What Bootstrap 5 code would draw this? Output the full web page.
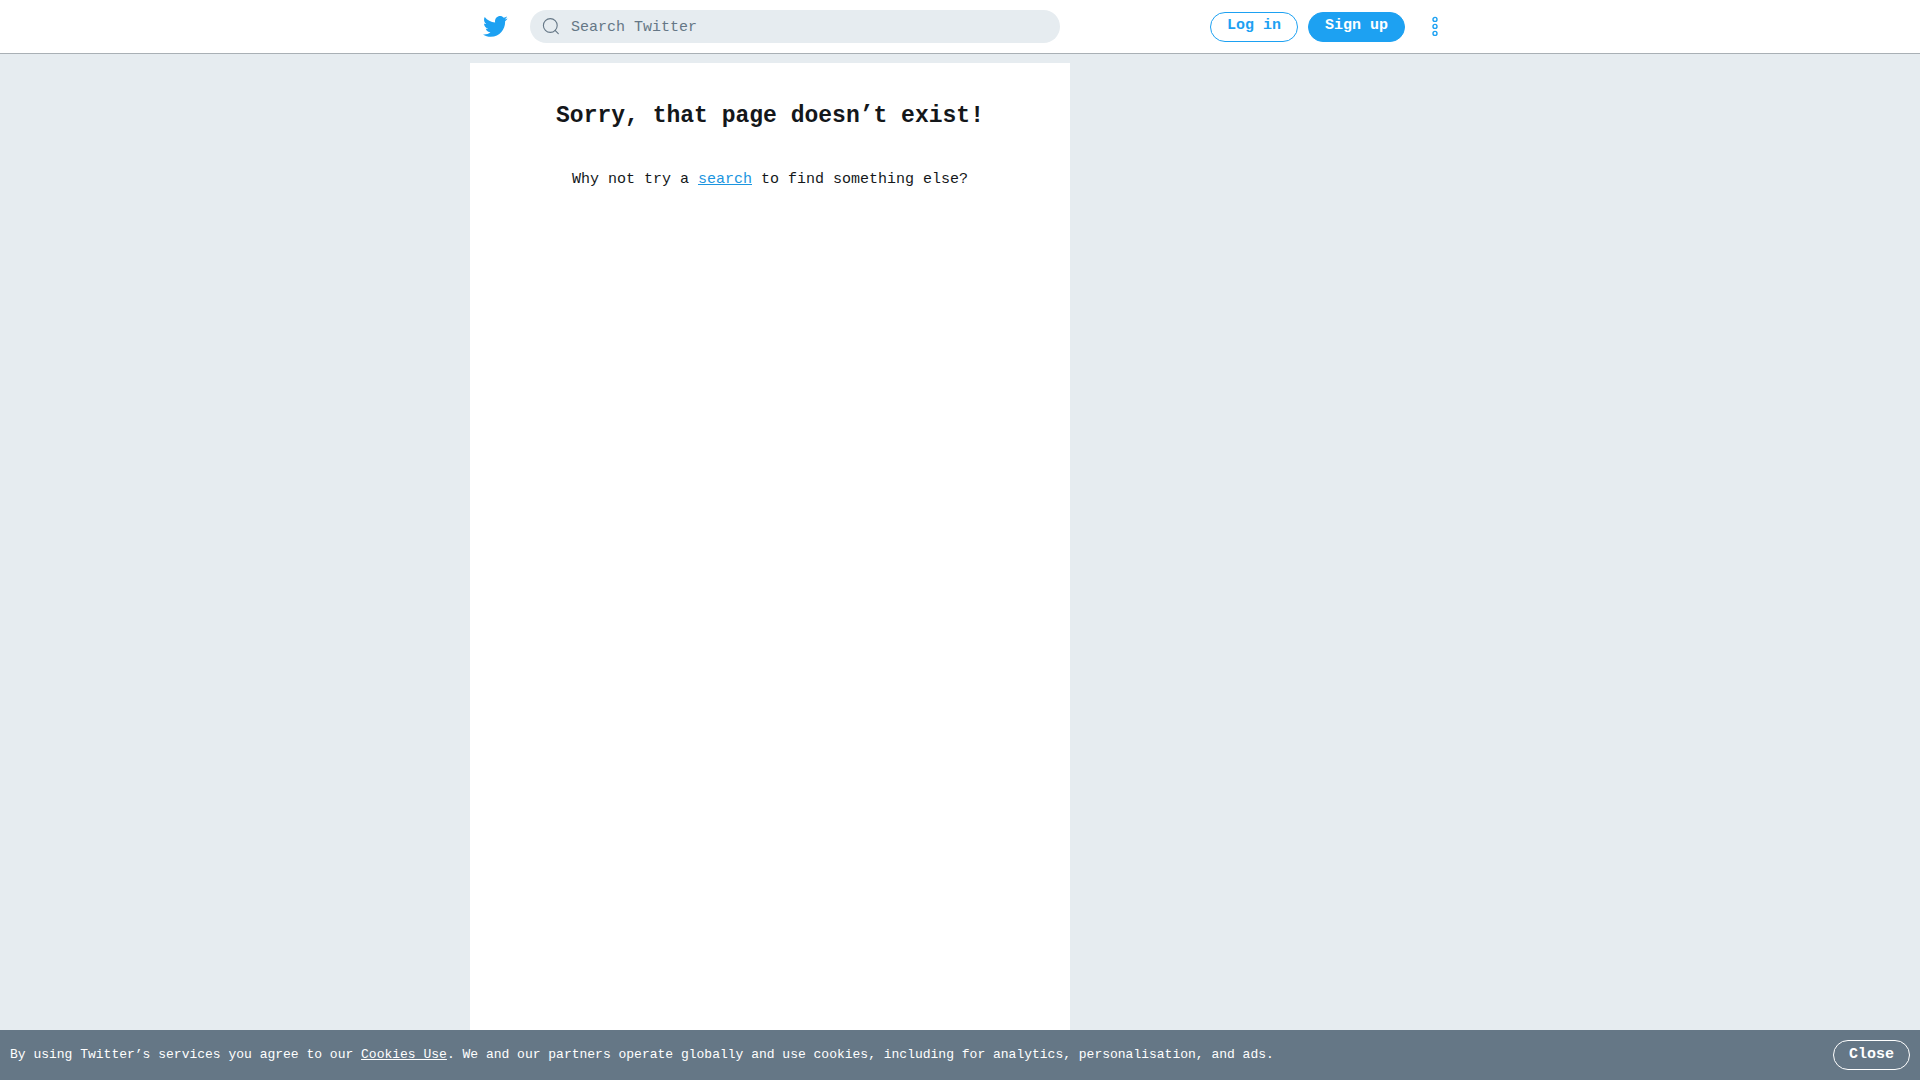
<!DOCTYPE html>
<html lang="en">
<head>
<meta charset="utf-8">
<meta name="viewport" content="width=device-width, initial-scale=1">
<title>Twitter</title>
<link href="https://cdn.jsdelivr.net/npm/bootstrap@5.3.0/dist/css/bootstrap.min.css" rel="stylesheet">
<style>
  body { background: #e6ecf0; color: #14171a; font: 15px/20px "Liberation Mono", monospace; }
  .top-bar { background: #fff; border-bottom: 1px solid #a9b0b5; }
  .page-wrap { max-width: 980px; }
  .top-bar .page-wrap { height: 53px; }
  .bird-link { width: 60px; padding-left: 12px; }
  .search-pill { width: 530px; height: 33px; background: #e6ecf0; color: #657786; padding: 0 11px; }
  .search-pill input { color: #657786; outline: 0; line-height: 20px; padding: 2px 0 0; }
  .search-pill input::placeholder { color: #657786; opacity: 1; }
  .search-pill svg { margin-right: 11px; }
  .pill { --bs-btn-font-size: 15px; --bs-btn-line-height: 20px; --bs-btn-padding-x: 16px; --bs-btn-padding-y: 0; --bs-btn-font-weight: 700; height: 30px; padding-top: 3px; padding-bottom: 5px; }
  .pill-outline { --bs-btn-color: #1da1f2; --bs-btn-border-color: #1da1f2; --bs-btn-hover-color: #1da1f2; --bs-btn-hover-border-color: #1da1f2; }
  .pill-fill { --bs-btn-color: #fff; --bs-btn-bg: #1da1f2; --bs-btn-border-color: #1da1f2; --bs-btn-hover-color: #fff; --bs-btn-hover-bg: #1a91da; }
  .pill-light { --bs-btn-color: #fff; --bs-btn-border-color: #fff; --bs-btn-hover-color: #fff; --bs-btn-hover-border-color: #fff; --bs-btn-padding-x: 15px; padding-top: 4px; padding-bottom: 4px; }
  .account-actions { gap: 10px; }
  .more-btn { width: 30px; margin-left: 5px; }
  .message-panel { max-width: 600px; margin-top: 9px; padding-top: 37px; }
  .message-panel h1 { font-size: 23px; line-height: 32px; margin-bottom: 38px; }
  .message-panel a { color: #1b95e0; }
  .cookie-bar { background: #657786; font-size: 13px; line-height: 20px; padding: 10px; }
</style>
<script src="https://cdn.jsdelivr.net/npm/bootstrap@5.3.0/dist/js/bootstrap.bundle.min.js" defer></script>
</head>
<body class="d-flex flex-column min-vh-100">
<header class="top-bar">
  <div class="page-wrap mx-auto d-flex align-items-center">
    <a href="#" class="bird-link d-flex flex-shrink-0" aria-label="Twitter">
      <svg width="26" height="27" viewBox="0 0 24 24" preserveAspectRatio="none" fill="#1da1f2" aria-hidden="true"><path d="M23.643 4.937c-.835.37-1.732.62-2.675.733.962-.576 1.7-1.49 2.048-2.578-.9.534-1.897.922-2.958 1.13-.85-.904-2.06-1.47-3.4-1.47-2.572 0-4.658 2.086-4.658 4.66 0 .364.042.718.12 1.06-3.873-.195-7.304-2.05-9.602-4.868-.4.69-.63 1.49-.63 2.342 0 1.616.823 3.043 2.072 3.878-.764-.025-1.482-.234-2.11-.583v.06c0 2.257 1.605 4.14 3.737 4.568-.392.106-.803.162-1.227.162-.3 0-.593-.028-.877-.082.593 1.85 2.313 3.198 4.352 3.234-1.595 1.25-3.604 1.995-5.786 1.995-.376 0-.747-.022-1.112-.065 2.062 1.323 4.51 2.093 7.14 2.093 8.57 0 13.255-7.098 13.255-13.254 0-.2-.005-.402-.014-.602.91-.658 1.7-1.477 2.323-2.41z"/></svg>
    </a>
    <form class="search-pill rounded-pill d-flex align-items-center" role="search">
      <svg width="19" height="19" viewBox="0 0 19 19" fill="none" stroke="#657786" stroke-width="1.1" stroke-linecap="round" class="flex-shrink-0" aria-hidden="true"><circle cx="9.3" cy="8.5" r="6.9"/><path d="M14.1 13.4l3.2 3.3"/></svg>
      <input type="search" class="flex-grow-1 border-0 bg-transparent" placeholder="Search Twitter" aria-label="Search Twitter">
    </form>
    <div class="account-actions d-flex align-items-center ms-auto">
      <button type="button" class="btn pill pill-outline rounded-pill text-nowrap">Log in</button>
      <button type="button" class="btn pill pill-fill rounded-pill text-nowrap">Sign up</button>
      <button type="button" class="more-btn border-0 bg-transparent p-0 d-flex justify-content-center" aria-label="More">
        <svg width="8" height="22" viewBox="0 0 8 22" fill="none" stroke="#1da1f2" stroke-width="1.4" aria-hidden="true"><circle cx="4" cy="3.4" r="2"/><circle cx="4" cy="10.4" r="2"/><circle cx="4" cy="17.4" r="2"/></svg>
      </button>
    </div>
  </div>
</header>
<main class="page-wrap w-100 mx-auto d-flex flex-grow-1">
  <section class="message-panel bg-white w-100 text-center">
    <h1 class="fw-bold">Sorry, that page doesn’t exist!</h1>
    <p class="mb-0">Why not try a <a href="#">search</a> to find something else?</p>
  </section>
</main>
<footer class="cookie-bar sticky-bottom text-white d-flex align-items-center justify-content-between">
  <span>By using Twitter’s services you agree to our <a href="#" class="text-white">Cookies Use</a>. We and our partners operate globally and use cookies, including for analytics, personalisation, and ads.</span>
  <button type="button" class="btn pill pill-light rounded-pill">Close</button>
</footer>
</body>
</html>
